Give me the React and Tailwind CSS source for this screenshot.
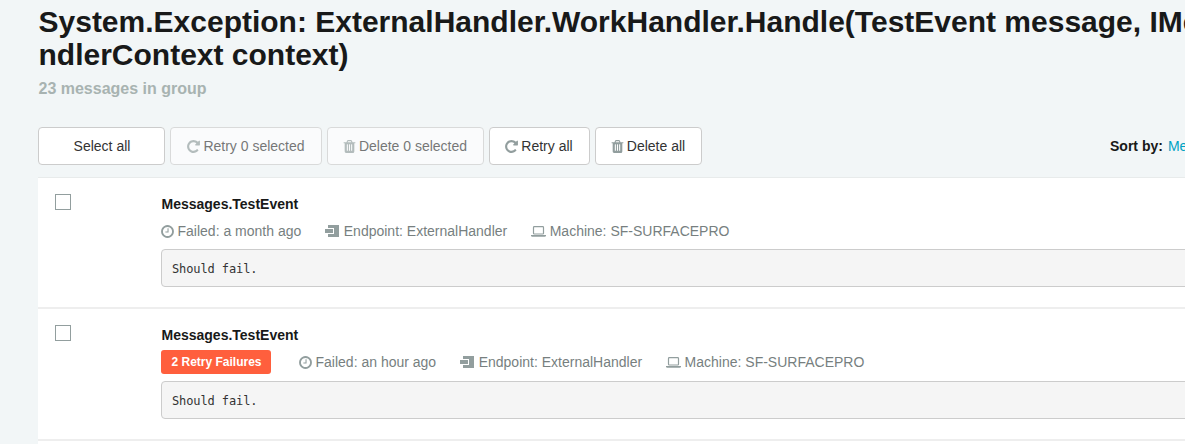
import React from "react";

function Icon({ path, className }) {
  return (
    <svg viewBox="128 0 1536 1792" className={className} fill="currentColor" aria-hidden="true">
      <path d={path} />
    </svg>
  );
}

const REPEAT =
  "M1664 256v448q0 26-19 45t-45 19h-448q-42 0-59-40-17-39 14-69l138-138q-148-137-349-137-104 0-198.5 40.5t-163.5 109.5-109.5 163.5-40.5 198.5 40.5 198.5 109.5 163.5 163.5 109.5 198.5 40.5q119 0 225-52t179-147q7-10 23-12 15 0 25 9l137 138q9 8 9.5 20.5t-7.5 22.5q-109 132-264 204.5t-327 72.5q-156 0-298-61t-245-164-164-245-61-298 61-298 164-245 245-164 298-61q147 0 284.5 55.5t244.5 156.5l130-129q29-31 70-14 39 17 39 59z";
const TRASH =
  "M704 1376v-704q0-14-9-23t-23-9h-64q-14 0-23 9t-9 23v704q0 14 9 23t23 9h64q14 0 23-9t9-23zm256 0v-704q0-14-9-23t-23-9h-64q-14 0-23 9t-9 23v704q0 14 9 23t23 9h64q14 0 23-9t9-23zm256 0v-704q0-14-9-23t-23-9h-64q-14 0-23 9t-9 23v704q0 14 9 23t23 9h64q14 0 23-9t9-23zm-544-992h448l-48-117q-7-9-17-11h-317q-10 2-17 11zm928 32v64q0 14-9 23t-23 9h-96v948q0 83-47 143.5t-113 60.5h-832q-66 0-113-58.5t-47-141.5v-952h-96q-14 0-23-9t-9-23v-64q0-14 9-23t23-9h309l70-167q15-37 54-63t79-26h320q40 0 79 26t54 63l70 167h309q14 0 23 9t9 23z";
const CLOCK =
  "M1024 544v448q0 14-9 23t-23 9h-320q-14 0-23-9t-9-23v-64q0-14 9-23t23-9h224v-352q0-14 9-23t23-9h64q14 0 23 9t9 23zm416 352q0-148-73-273t-198-198-273-73-273 73-198 198-73 273 73 273 198 198 273 73 273-73 198-198 73-273zm224 0q0 209-103 385.5t-279.5 279.5-385.5 103-385.5-103-279.5-279.5-103-385.5 103-385.5 279.5-279.5 385.5-103 385.5 103 279.5 279.5 103 385.5z";

function EndpointIcon() {
  return (
    <svg viewBox="0 0 14 12" className="h-3 w-3.5 shrink-0" aria-hidden="true">
      <path d="M3 0h11v12H3z" fill="currentColor" />
      <path d="M0 3h9v6H0z" fill="white" />
      <path d="M0 4h8v4H0z" fill="currentColor" />
    </svg>
  );
}

function LaptopIcon() {
  return (
    <svg viewBox="0 0 15 11" className="h-[11px] w-[15px] shrink-0" aria-hidden="true">
      <rect x="2.5" y="0.6" width="10" height="7.4" rx="0.8" fill="none" stroke="currentColor" strokeWidth="1.2" />
      <path d="M0 8.900h15v.6q0 1.300-1.400 1.300H1.400Q0 10.800 0 9.500z" fill="currentColor" />
    </svg>
  );
}

function Button({ icon, disabled, className, children }) {
  return (
    <button
      disabled={disabled}
      className={`flex h-[38px] shrink-0 items-center justify-center gap-[3px] rounded border border-[#cccccc] bg-white text-sm whitespace-nowrap text-[#333333] disabled:opacity-65 ${className}`}
    >
      {icon && <Icon path={icon} className="h-[15px] w-[13px] shrink-0 text-[#929e9e]" />}
      {children}
    </button>
  );
}

function Message({ retries, failed, className }) {
  return (
    <div className={`flex border-b-2 border-[#eeeeee] bg-white pl-[17px] ${className}`}>
      <div className="mt-4 mr-[90px] size-4 shrink-0 border border-[#929e9e] bg-white" />
      <div className="w-[1100px] shrink-0">
        <div className="mt-4 h-5 pl-[0.5px] text-sm leading-5 font-bold text-[#181919]">Messages.TestEvent</div>
        <div className={`flex items-center text-sm leading-5 text-[#777f7f] ${retries ? "mt-[5px] h-6" : "mt-[7px] h-5"}`}>
          {retries && (
            <span className="mr-7 flex h-6 w-[110px] items-center justify-center rounded-[3px] bg-[#ff5f3d] pl-px text-xs font-bold text-white">
              {retries}
            </span>
          )}
          <span className="mr-[23.5px] flex items-center gap-[3.5px]">
            <Icon path={CLOCK} className="h-[15px] w-[13px] shrink-0 text-[#929e9e]" />
            Failed: {failed}
          </span>
          <span className="mr-6 flex items-center gap-[5px]">
            <span className="text-[#929e9e]"><EndpointIcon /></span>
            Endpoint: ExternalHandler
          </span>
          <span className="flex items-center gap-[3.5px]">
            <span className="text-[#929e9e]"><LaptopIcon /></span>
            Machine: SF-SURFACEPRO
          </span>
        </div>
        <pre className={`h-[38px] rounded border border-[#cccccc] bg-[#f5f5f5] px-2.5 font-['DejaVu_Sans_Mono',monospace] text-[12px] leading-[39px] tracking-[-0.1px] text-[#333333] ${retries ? "mt-[7px]" : "mt-2"}`}>
          Should fail.
        </pre>
      </div>
    </div>
  );
}

export default function App() {
  return (
    <main className="h-[444px] w-full overflow-hidden bg-[#f2f6f7] pt-[5px] pl-[38px] font-['Liberation_Sans',Arial,sans-serif]">
      <h1 className="w-[1200px] pl-[0.5px] text-[30px] leading-[33px] font-bold whitespace-nowrap text-[#181919]">
        System.Exception: ExternalHandler.WorkHandler.Handle(TestEvent message, IMessageHa<br />
        ndlerContext context)
      </h1>
      <h2 className="mt-[9px] h-[18px] pl-[0.5px] text-base leading-[18px] font-bold text-[#a8b3b1]">23 messages in group</h2>
      <div className="mt-[29px] flex h-[38px] items-center gap-[5px]">
        <Button className="w-[127px] pl-px">Select all</Button>
        <Button icon={REPEAT} disabled className="w-[152px]">Retry 0 selected</Button>
        <Button icon={TRASH} disabled className="w-[157px] pr-px">Delete 0 selected</Button>
        <Button icon={REPEAT} className="w-[101px] pr-px">Retry all</Button>
        <Button icon={TRASH} className="w-[107px] pr-px">Delete all</Button>
        <div className="-mr-24 ml-auto flex w-[171px] shrink-0 gap-[5px] text-sm whitespace-nowrap">
          <span className="font-bold text-[#181919]">Sort by:</span>
          <span className="text-[#00a3c4]">Message type</span>
        </div>
      </div>
      <div className="mt-3 border-t border-[#e8ebeb]">
        <Message failed="a month ago" className="h-[131px]" />
        <Message retries="2 Retry Failures" failed="an hour ago" className="h-[132px]" />
        <div className="h-10 bg-white" />
      </div>
    </main>
  );
}
